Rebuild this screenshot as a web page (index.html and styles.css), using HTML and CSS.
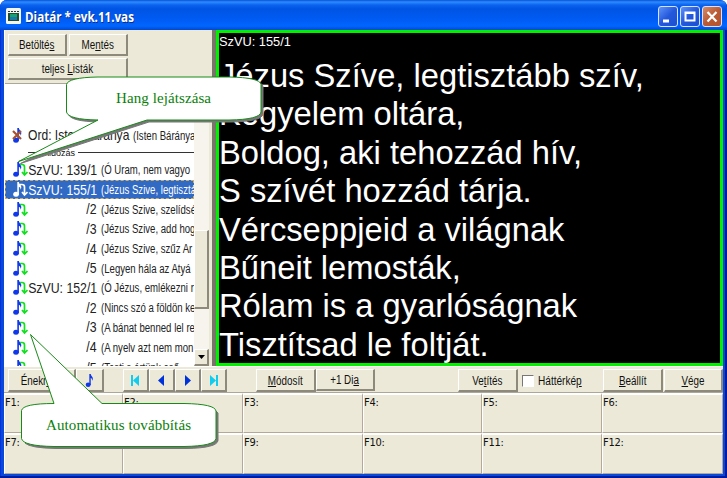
FILE: index.html
```html
<!DOCTYPE html>
<html lang="hu">
<head>
<meta charset="utf-8">
<title>Diatár * evk.11.vas</title>
<link rel="stylesheet" href="styles.css">
</head>
<body>
<svg class="defs" width="0" height="0">
  <symbol id="note" viewBox="0 0 9 17"><ellipse cx="3" cy="13.3" rx="2.8" ry="2.5"/><path d="M4.300 1h1.600c.1 2.200 2.400 2.500 2.400 5.200 0 1-.3 1.800-.9 2.500.2-1.700-.3-2.600-1.500-3v8H4.300z"/></symbol>
  <symbol id="next" viewBox="0 0 8 15"><path d="M0 2.500h2Q4.500 2.500 4.500 5v7.500M2 10l2.500 3 3-3" fill="none" stroke="currentColor" stroke-width="1.700"/></symbol>
</svg>
<div class="window">
  <header class="titlebar">
    <svg class="appicon" width="15" height="16" viewBox="0 0 15 16"><rect width="15" height="16" rx="1.500" fill="#f4f7ee"/><path d="M2 5h11v8H2z" fill="#234b35"/><path d="M2 3.500h11" stroke="#334" stroke-dasharray="2 1"/><path d="M4 6h7v3H4z" fill="#18a070"/><path d="M4 9h7v3H4z" fill="#1979a8"/></svg>
    <h1><span>Diatár * evk.11.vas</span></h1>
    <div class="controls">
      <button class="ctl"><svg width="18" height="19"><path d="M4 14h6" stroke="#fff" stroke-width="3"/></svg></button>
      <button class="ctl"><svg width="18" height="19"><path d="M4.500 5.500h9v8h-9zM4 6h10" fill="none" stroke="#fff" stroke-width="2"/></svg></button>
      <button class="ctl close"><svg width="18" height="19"><path d="M4.500 5l9 9.500M13.500 5l-9 9.500" stroke="#fff" stroke-width="2.200"/></svg></button>
    </div>
  </header>
  <main class="work">
    <aside class="side">
      <div class="sidebuttons">
        <button class="btn w59"><span>Betölté<u>s</u></span></button>
        <button class="btn w59"><span>Me<u>n</u>tés</span></button>
        <button class="btn w120"><span>teljes <u>L</u>isták</span></button>
      </div>
      <div class="listbox">
        <div class="list">
          <div class="row first"><svg class="n"><use href="#note"/><path d="M0 4l8 8M8 4l-8 8" stroke="#a8502c" stroke-width="2.200"/></svg><i class="gap"></i><span class="ord"><b>Ord: Isten Báránya</b></span><span class="sub">(Isten Báránya</span></div>
          <div class="sep"><span>Áldozás</span></div>
          <div class="row"><svg class="n"><use href="#note"/></svg><svg class="a"><use href="#next"/></svg><span class="num"><b>SzVU: 139/1</b></span><span class="sub">(Ó Uram, nem vagyo</span></div>
          <div class="row selected"><svg class="n"><use href="#note"/></svg><svg class="a"><use href="#next"/></svg><span class="num"><b>SzVU: 155/1</b></span><span class="sub">(Jézus Szive, legtisztá</span></div>
          <div class="row"><svg class="n"><use href="#note"/></svg><svg class="a"><use href="#next"/></svg><span class="num"><b>/2</b></span><span class="sub">(Jézus Szive, szelídsé</span></div>
          <div class="row"><svg class="n"><use href="#note"/></svg><svg class="a"><use href="#next"/></svg><span class="num"><b>/3</b></span><span class="sub">(Jézus Szive, add hog</span></div>
          <div class="row"><svg class="n"><use href="#note"/></svg><svg class="a"><use href="#next"/></svg><span class="num"><b>/4</b></span><span class="sub">(Jézus Szive, szűz Ar</span></div>
          <div class="row"><svg class="n"><use href="#note"/></svg><svg class="a"><use href="#next"/></svg><span class="num"><b>/5</b></span><span class="sub">(Legyen hála az Atyá</span></div>
          <div class="row"><svg class="n"><use href="#note"/></svg><svg class="a"><use href="#next"/></svg><span class="num"><b>SzVU: 152/1</b></span><span class="sub">(Ó Jézus, emlékezni r</span></div>
          <div class="row"><svg class="n"><use href="#note"/></svg><svg class="a"><use href="#next"/></svg><span class="num"><b>/2</b></span><span class="sub">(Nincs szó a földön ke</span></div>
          <div class="row"><svg class="n"><use href="#note"/></svg><svg class="a"><use href="#next"/></svg><span class="num"><b>/3</b></span><span class="sub">(A bánat benned lel re</span></div>
          <div class="row"><svg class="n"><use href="#note"/></svg><svg class="a"><use href="#next"/></svg><span class="num"><b>/4</b></span><span class="sub">(A nyelv azt nem mon</span></div>
          <div class="row last"><svg class="n"><use href="#note"/></svg><svg class="a"><use href="#next"/></svg><span class="num"><b>/5</b></span><span class="sub">(Testi s értünk eső</span></div>
        </div>
        <div class="scroll"><div class="thumb"></div><div class="down"><svg width="7" height="4"><path d="M0 0h7L3.500 4z"/></svg></div></div>
      </div>
    </aside>
    <div class="splitter"></div>
    <section class="slide">
      <p class="ref"><span>SzVU: 155/1</span></p>
      <div class="verse">
        <p>Jézus Szíve, legtisztább szív,</p>
        <p>Kegyelem oltára,</p>
        <p>Boldog, aki tehozzád hív,</p>
        <p>S szívét hozzád tárja.</p>
        <p>Vércseppjeid a világnak</p>
        <p>Bűneit lemosták,</p>
        <p>Rólam is a gyarlóságnak</p>
        <p>Tisztítsad le foltját.</p>
      </div>
    </section>
  </main>
  <nav class="toolbar">
    <button class="btn w68 enek"><span>Énekr<u>e</u>nd</span></button>
    <button class="btn w27"><svg class="bn"><use href="#note"/></svg></button>
    <div class="nav">
      <button class="btn w26"><svg width="11" height="11"><path d="M1 0h2v11H1zM9 0v11L3 5.500z" fill="#10cdf0"/></svg></button>
      <button class="btn w26"><svg width="11" height="11"><path d="M8 0v11L2 5.500z" fill="#0032dc"/></svg></button>
      <button class="btn w26"><svg width="11" height="11"><path d="M3 0v11l6-5.500z" fill="#0032dc"/></svg></button>
      <button class="btn w26"><svg width="11" height="11"><path d="M8 0h2v11H8zM2 0v11l6-5.500z" fill="#10cdf0"/></svg></button>
    </div>
    <div class="edit">
      <button class="btn w60"><span><u>M</u>ódosít</span></button>
      <button class="btn w59 dia"><span>+1 Di<u>a</u></span></button>
    </div>
    <button class="btn w60 project"><span>Ve<u>t</u>ítés</span></button>
    <label class="bg"><i></i><span>Háttérké<u>p</u></span></label>
    <button class="btn w60"><span><u>B</u>eállít</span></button>
    <button class="btn w59 quit"><span><u>V</u>ége</span></button>
  </nav>
  <section class="slots">
    <div>F1:</div><div>F2:</div><div>F3:</div><div>F4:</div><div>F5:</div><div>F6:</div>
    <div>F7:</div><div>F8:</div><div>F9:</div><div>F10:</div><div>F11:</div><div>F12:</div>
  </section>
</div>
<svg class="callouts" width="727" height="478">
  <defs>
    <path id="c1" d="M66.500 84.500Q68 77.500 98 77H229Q260 77.500 261 84.500V112Q260 119.500 229 120H147L18.500 161.500L98 120Q68 119.500 66.500 112Z"/>
    <path id="c2" d="M21.500 410.500Q23 403.500 54 403.500L30.500 334.500L102 403.500H184Q215 404 216 411V438.500Q215 446 184 446.500H54Q23 446 21.500 438.500Z"/>
  </defs>
  <use href="#c1" x="2" y="2" class="shade"/><use href="#c1" class="bubble"/>
  <path class="shade" d="M216 411L218 413V440.500Q217 448 186 448.500H56Q30 448 25 443Z"/><use href="#c2" class="bubble"/>
  <text x="116" y="103" textLength="95">Hang lejátszása</text>
  <text x="46" y="430" textLength="145">Automatikus továbbítás</text>
</svg>
</body>
</html>
```
FILE: styles.css
```css
* { box-sizing: border-box; }
body { margin: 0; width: 727px; height: 478px; overflow: hidden; background: #fff; font-family: "Liberation Sans", Arial, sans-serif; color: #111; }
p, h1 { margin: 0; }
button { font: inherit; color: inherit; padding: 0; }
svg { display: block; flex: none; }
.defs { position: absolute; }
.window { width: 727px; height: 478px; padding: 0 4px 4px 4px; border-radius: 7px 7px 0 0; background: #0848dc; box-shadow: inset -2px -2px #001b9c, inset 1px 0 #0831d9; display: flex; flex-direction: column; overflow: hidden; }

.titlebar { height: 30px; flex: none; margin: 0 -4px; padding: 2px 5px 0 6px; display: flex; align-items: center; border-radius: 7px 7px 0 0; background: linear-gradient(#0a50d8 0, #2b8cff 2px, #0b63ee 5px, #0054e3 9px, #005cf5 20px, #0066ff 26px, #0048d0 30px); }
h1 { margin-left: 4px; flex: 1; font: bold 15px/20px "Open Sans", "Noto Sans", sans-serif; color: #fff; text-shadow: 1px 1px #0a2d87; white-space: nowrap; }
h1 span { display: inline-block; transform: scaleX(.775); transform-origin: 0 50%; }
.controls { display: flex; gap: 2px; }
.ctl { width: 20px; height: 21px; border: 1px solid #d5e2ff; border-radius: 3px; background: linear-gradient(135deg, #5c93fa, #2458dc 50%, #1c50d0); }
.close { background: linear-gradient(135deg, #d68c68, #b95a35 50%, #b5532c); }

.work { height: 336px; flex: none; display: flex; }
.side { width: 208px; display: flex; flex-direction: column; background: #ece9d8; border-left: 1px solid #fff; }
.sidebuttons { height: 53px; flex: none; padding: 4px 0 0 3px; width: 126px; display: flex; flex-wrap: wrap; gap: 2px; align-content: flex-start; }
.btn { height: 22px; flex: none; display: flex; justify-content: center; align-items: center; background: #ece9d8; border: solid; border-width: 1px 2px 2px 1px; border-color: #fff #8d897b #8d897b #fff; font-size: 12px; line-height: 14px; white-space: nowrap; }
.btn span { display: inline-block; transform: scaleX(.82); }
.w26 { width: 26px; } .w27 { width: 28px; } .w59 { width: 59px; } .w60 { width: 60px; } .w68 { width: 68px; } .w120 { width: 120px; }

.listbox { flex: 1; min-height: 0; display: flex; border-top: 1px solid #aca899; }
.list { width: 189px; background: #fff; overflow: hidden; padding-top: 41px; }
.row { height: 19.7px; display: flex; align-items: center; padding-left: 8px; white-space: nowrap; color: #1038e8; }
.first { height: 20px; }
.last { padding-top: 2px; }
.n { width: 9px; height: 17px; fill: currentColor; overflow: visible; }
.a { width: 8px; height: 15px; color: #10e020; margin: 0 -1px 0 -2px; }
.gap { width: 6px; flex: none; }
.num { width: 69px; flex: none; margin-left: 1px; display: flex; justify-content: flex-end; color: #222; font-size: 15px; line-height: 18px; }
.num b { flex: none; font-weight: normal; transform: scaleX(.82); transform-origin: 100% 50%; }
.sub { flex: none; margin-left: 4px; color: #222; font-size: 12px; line-height: 18px; padding-top: 1px; transform: scaleX(.8); transform-origin: 0 50%; }
.ord { flex: none; width: 101px; color: #222; font-size: 15px; line-height: 18px; }
.ord b { display: inline-block; font-weight: normal; transform: scaleX(.805); transform-origin: 0 50%; }
.selected { background: #316ac5; color: #fff; outline: 1px dashed #cfb06a; outline-offset: -1px; }
.selected .a, .selected .num, .selected .sub { color: #fff; }
.sep { height: 15px; margin-left: 23px; display: flex; align-items: center; gap: 3px; font-size: 9px; }
.sep::before, .sep::after { content: ""; height: 1px; background: #333; width: 12px; }
.sep::after { flex: 1; }
.scroll { flex: 1; background: #f6f4ec; display: flex; flex-direction: column; justify-content: flex-end; margin-right: 3px; }
.thumb { height: 79px; margin-bottom: 40px; background: #ece9d8; border: solid; border-width: 1px 2px 2px 1px; border-color: #fff #8d897b #8d897b #fff; }
.down { height: 17px; display: flex; align-items: center; justify-content: center; background: #ece9d8; border: solid; border-width: 1px 2px 2px 1px; border-color: #fff #8d897b #8d897b #fff; }
.splitter { width: 4px; background: #77746a; }
.slide { flex: 1; background: #000; border: 3px solid #00f000; color: #fff; overflow: hidden; white-space: nowrap; }
.ref { height: 23px; font-size: 13px; line-height: 17px; }
.ref span { display: inline-block; transform: scaleX(.985); transform-origin: 0 50%; }
.verse { font-size: 34px; line-height: 38.4px; transform: scaleX(.962); transform-origin: 0 0; }

.toolbar { height: 27px; flex: none; padding: 2px 0 0 4px; display: flex; align-items: flex-start; background: #ece9d8; border-top: 1px solid #fff; border-bottom: 1px solid #aca899; }
.toolbar .btn { height: 23px; }
.toolbar .btn span { margin-top: 1px; }
.bn { width: 9px; height: 15px; fill: #1038e8; }
.nav { display: flex; margin-left: 19px; }
.edit { display: flex; margin-left: 29px; }
.toolbar .dia { height: 22px; }
.project { margin-left: 83px; }
.bg { width: 85px; height: 23px; display: flex; align-items: center; padding-left: 4px; font-size: 12px; }
.bg i { width: 12px; height: 12px; flex: none; background: #fff; border: 1px solid; border-color: #777 #fff #fff #777; }
.bg span { margin-left: 4px; transform: scaleX(.84); transform-origin: 0 50%; }
.quit { margin-left: 1px; }
.slots { height: 81px; flex: none; display: grid; grid-template-columns: 119px 120px 120px 119px 120px 1fr; grid-template-rows: 40px 41px; background: #ece9d8; font: 11px/13px "DejaVu Sans Condensed", "DejaVu Sans", sans-serif; letter-spacing: -.3px; }
.slots div { border: solid; border-width: 2px 1px 1px 1px; border-color: #fff #b4a898 #b4a898 #fff; padding-top: 1px; }

.callouts { position: absolute; left: 0; top: 0; }
.shade { fill: #777; stroke: #777; }
.bubble { fill: #fff; stroke: #188a18; }
.callouts text { font: 15px "Liberation Serif", "Times New Roman", serif; fill: #0a800a; }
```
